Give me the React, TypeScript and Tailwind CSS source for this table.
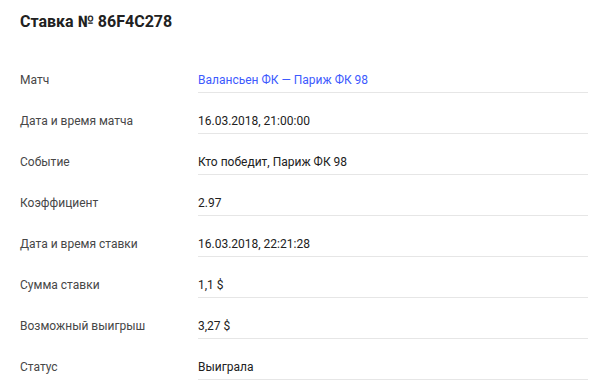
const rows: { label: string; value: string; link?: boolean }[] = [
  { label: 'Матч', value: 'Валансьен ФК — Париж ФК 98', link: true },
  { label: 'Дата и время матча', value: '16.03.2018, 21:00:00' },
  { label: 'Событие', value: 'Кто победит, Париж ФК 98' },
  { label: 'Коэффициент', value: '2.97' },
  { label: 'Дата и время ставки', value: '16.03.2018, 22:21:28' },
  { label: 'Сумма ставки', value: '1,1 $' },
  { label: 'Возможный выигрыш', value: '3,27 $' },
  { label: 'Статус', value: 'Выиграла' },
];

export default function App() {
  return (
    <div className="w-[599px] h-[386px] bg-white font-['Roboto',sans-serif] overflow-hidden">
      <div className="pl-5 pr-[11px] pt-[10px]">
        <h1 className="text-base leading-6 font-bold text-[#212121]">Ставка № 86F4C278</h1>
        <div className="mt-[18px]">
          {rows.map(r => (
            <div key={r.label} className="flex">
              <div className="w-[178px] shrink-0 pt-[18px] pb-[3px] text-[12px] leading-5 text-[#474747]">
                {r.label}
              </div>
              <div
                className={`flex-1 pt-[18px] pb-[2px] border-b border-[#e6e6e6] text-[12px] leading-5 ${
                  r.link ? 'text-[#3d5afe]' : 'text-[#212121]'
                }`}
              >
                {r.value}
              </div>
            </div>
          ))}
        </div>
      </div>
    </div>
  );
}
